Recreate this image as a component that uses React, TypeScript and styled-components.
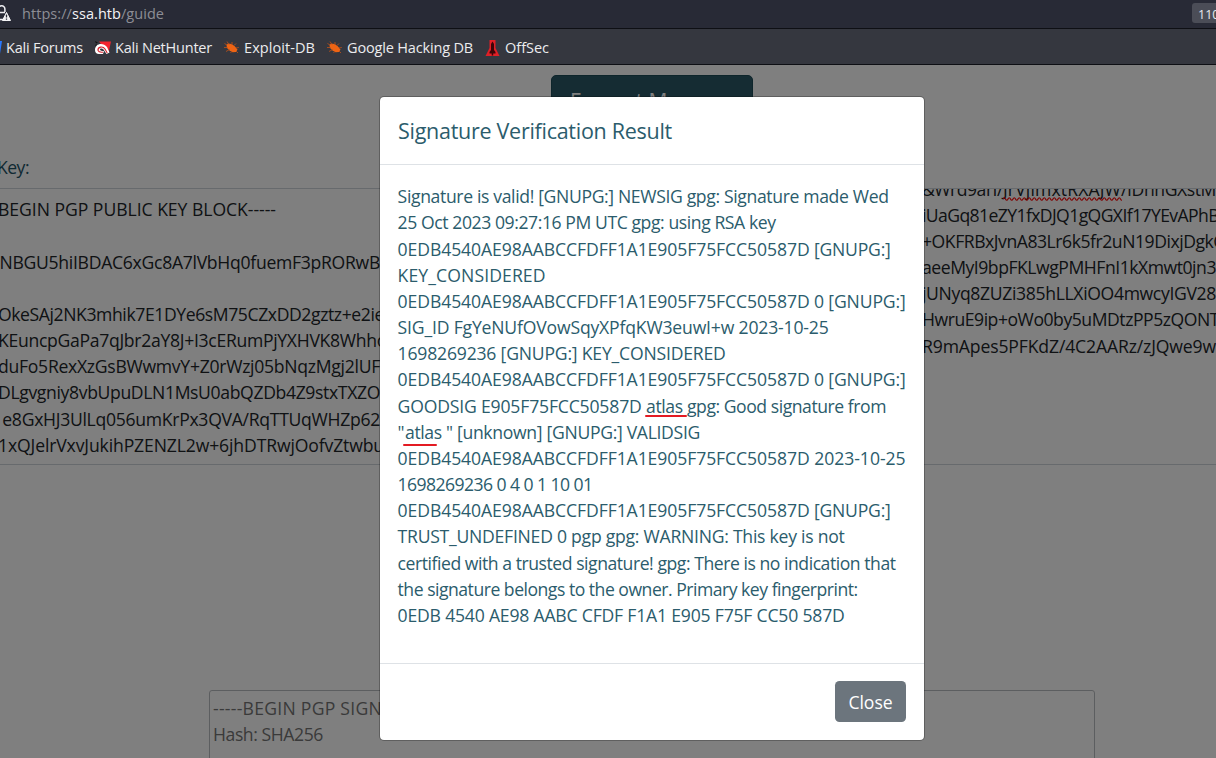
import React, { useLayoutEffect, useRef, useState } from 'react';
import styled, { createGlobalStyle } from 'styled-components';

const GlobalStyle = createGlobalStyle`
  * { box-sizing: border-box; }
  body { margin: 0; overflow: hidden; background: #fff; font-family: "Open Sans", "Noto Sans", sans-serif; }
`;

const Window = styled.div`
  width: 1216px;
  height: 758px;
  display: flex;
  flex-direction: column;
  overflow: hidden;
`;

const UrlBar = styled.div`
  height: 29px;
  flex: none;
  display: flex;
  align-items: center;
  background: #282a36;
  border-bottom: 1px solid #0e0f14;
  color: #8d8e95;
  font-size: 14.5px;
  line-height: 26px;
`;

const LockIcon = styled.svg`
  width: 12px;
  height: 20px;
  margin-right: 10px;
`;

const Host = styled.span`
  color: #f4f4f6;
`;

const Zoom = styled.div`
  margin-left: auto;
  width: 24px;
  height: 20px;
  margin-top: -2px;
  padding-left: 6px;
  line-height: 23px;
  font-size: 12.5px;
  color: #e8e9ee;
  background: #4b4d57;
  border-radius: 3px 0 0 3px;
`;

const Bookmarks = styled.div`
  height: 36px;
  flex: none;
  display: flex;
  align-items: center;
  background: #35373f;
  border-bottom: 1px solid #0e0f14;
  color: #ececee;
  font-size: 14.5px;
  line-height: 32px;
  padding-top: 3px;
`;

const Bookmark = styled.div<{ $before: number }>`
  display: flex;
  align-items: center;
  margin-left: ${(p) => p.$before}px;
`;

const BookmarkIcon = styled.svg<{ $w: number }>`
  width: ${(p) => p.$w}px;
  height: 16px;
  margin-right: ${(p) => (p.$w === 15 ? 5 : 4)}px;
`;

const Page = styled.main`
  position: relative;
  flex: 1;
  display: flex;
  flex-direction: column;
  overflow: hidden;
  background: #fff;
  color: #212529;
  font-size: 17.6px;
  line-height: 26.15px;
`;

const EncryptButton = styled.div`
  width: 202px;
  height: 49px;
  flex: none;
  margin: 10px 0 0 551px;
  padding: 11px 0 0 18px;
  border: 1px solid #1d4a57;
  border-radius: 5px;
  background: #2a5966;
  color: #fff;
  font-size: 21px;
  line-height: 29px;
`;

const KeyLabel = styled.div`
  height: 64px;
  flex: none;
  padding-top: 30px;
  margin-left: -3px;
  color: #225366;
`;

const Columns = styled.div`
  display: flex;
  flex: none;
  justify-content: space-between;
`;

const Area = styled.div<{ $w: number; $pad: number; $shift: number }>`
  width: ${(p) => p.$w}px;
  height: 277px;
  border: solid #ced4da;
  border-width: 1px 0;
  padding-left: ${(p) => p.$pad}px;
  overflow: hidden;
  & > div:first-child { margin-top: ${(p) => p.$shift}px; }
`;

const Line = styled.div`
  display: flex;
  height: 26.18px;
  white-space: pre;
`;

const MessageArea = styled.div`
  width: 886px;
  height: 120px;
  margin: 225px 0 0 209px;
  flex: none;
  padding: 4px 3px;
  border: 1px solid #b9bcc0;
  border-radius: 3px;
  color: #757575;
`;

const Backdrop = styled.div`
  position: absolute;
  inset: 0;
  background: rgba(0, 0, 0, 0.5);
`;

const Dialog = styled.section`
  position: absolute;
  left: 379px;
  top: 31px;
  width: 546px;
  height: 645px;
  display: flex;
  flex-direction: column;
  background: #fff;
  background-clip: padding-box;
  border: 1px solid rgba(0, 0, 0, 0.25);
  border-radius: 5px;
  color: #2b5c6c;
`;

const DialogHeader = styled.header`
  height: 68px;
  flex: none;
  padding: 19px 18px 0;
  border-bottom: 1px solid #dee2e6;
  font-size: 21.5px;
  line-height: 30px;
`;

const DialogBody = styled.div`
  flex: 1;
  padding: 18.2px 17.6px 0;
`;

const DialogFooter = styled.footer`
  height: 77px;
  flex: none;
  display: flex;
  justify-content: flex-end;
  padding: 17px 18px 0;
  border-top: 1px solid #dee2e6;
`;

const CloseButton = styled.button`
  width: 71px;
  height: 41px;
  padding: 1px 0 0;
  border: 0;
  border-radius: 4.5px;
  background: #6c757d;
  color: #fff;
  font: 17.6px/26px "Open Sans", sans-serif;
`;

const FitText = styled.span`
  display: inline-block;
  flex: none;
  white-space: pre;
`;

const Marked = styled.span`
  position: relative;
`;

const RedMark = styled.i<{ $left: number; $w: number; $top: number }>`
  position: absolute;
  left: ${(p) => p.$left}px;
  top: ${(p) => p.$top}px;
  width: ${(p) => p.$w}px;
  height: 2px;
  border-radius: 1px;
  background: #e31b23;
`;

const Squiggle = styled.svg`
  position: absolute;
  left: 0;
  top: 21px;
  width: 119px;
  height: 4px;
`;

/* Spreads a run of text over a set width by adjusting the letter spacing. */
function Fit({ w, children }: { w: number; children: string }) {
  const ref = useRef<HTMLSpanElement>(null);
  const [spacing, setSpacing] = useState(0);
  useLayoutEffect(() => {
    if (ref.current) {
      setSpacing((w - ref.current.getBoundingClientRect().width) / children.length);
    }
  }, [w, children]);
  return <FitText ref={ref} style={{ letterSpacing: spacing }}>{children}</FitText>;
}

const publicKey: [string, number][] = [
  ['BEGIN PGP PUBLIC KEY BLOCK-----', 278],
  ['', 0],
  ['GNBGU5hiIBDAC6xGc8A7lVbHq0fuemF3pRORwB', 393],
  ['', 0],
  ['OkeSAj2NK3mhik7E1DYe6sM75CZxDD2gztz+e2ie', 386],
  ['KEuncpGaPa7qJbr2aY8J+I3cERumPjYXHVK8Whho', 389],
  ['duFo5RexXzGsBWwmvY+Z0rWzj05bNqzMgj2lUF', 382],
  ['DLgvgniy8vbUpuDLN1MsU0abQZDb4Z9stxTXZO', 382],
  [' e8GxHJ3UlLq056umKrPx3QVA/RqTTUqWHZp62', 382],
  ['1xQJelrVxvJukihPZENZL2w+6jhDTRwjOofvZtwbu', 386],
];
const publicKeyOffset = [-2, 0, -13, 0, -2, -2, -2, -2, -2, -2];

const signedText: [string, number][] = [
  ['iUaGq81eZY1fxDJQ1gQGXIf17YEvAPhB', 297],
  ['+OKFRBxJvnA83Lr6k5fr2uN19DixjDgkC', 302],
  ['aeeMyI9bpFKLwgPMHFnI1kXmwt0jn3', 294],
  ['jUNyq8ZUZi385hLLXiOO4mwcyIGV28', 294],
  ['HwruE9ip+oWo0by5uMDtzPP5zQONT', 297],
  ['R9mApes5PFKdZ/4C2AARz/zJQwe9w', 294],
];

const fingerprint = '0EDB4540AE98AABCCFDFF1A1E905F75FCC50587D';

const Offset = styled.div<{ $x: number }>`
  margin-left: ${(p) => p.$x}px;
`;

const Bug = () => (
  <BookmarkIcon $w={15} viewBox="0 0 15 16">
    <path d="M2.500 5l1.500-1.500 3.500.5 3 2 3 3.500-1.500 2.500-3.500.3-3-1.800L3 8z" fill="#ee6414" />
    <path d="M.5 3.500l2.500 1.500M3 1.500l2 3M8 2v3M0 7.500l3.500 0M2 11.500l3.500-2M6.500 13l1.500-2M10 5.500l2-2M12 8l2.800-.5M12 11l2 2" stroke="#b04f1c" strokeWidth=".9" fill="none" />
  </BookmarkIcon>
);

export default function App() {
  return (
    <Window>
      <GlobalStyle />
      <UrlBar>
        <LockIcon viewBox="0 0 12 20">
          <path d="M-4 8.500h9M-1.500 8V5a3.200 3.200 0 0 1 6.400 0v3M-4 15.500h7" fill="none" stroke="#eeeef2" strokeWidth="1.500" />
          <path d="M6.500 8.500L10.500 16.500H2.500z" fill="#f4f4f6" stroke="#f4f4f6" strokeLinejoin="round" />
          <path d="M6.500 10.500v3M6.500 14.500v1.200" stroke="#282a36" strokeWidth="1.300" />
        </LockIcon>
        <Fit w={50}>https://</Fit>
        <Host><Fit w={49}>ssa.htb</Fit></Host>
        <Fit w={43}>/guide</Fit>
        <Zoom>110%</Zoom>
      </UrlBar>
      <Bookmarks>
        <Bookmark $before={0}>
          <BookmarkIcon $w={2} viewBox="0 0 2 16"><path d="M0 1h2L0 14z" fill="#2878ff" /></BookmarkIcon>
          <Fit w={77}>Kali Forums</Fit>
        </Bookmark>
        <Bookmark $before={12}>
          <BookmarkIcon $w={16} viewBox="0 0 16 16">
            <path d="M4 1.500h12L13.500 13 9 8z" fill="#f3242f" />
            <path d="M0 10C0 3.500 8 2 12 7l2.500 5.500-3 1.500L8.500 9.500C7 8 5 8.500 5 9.500s2 1.500 4 1.500l-1 3H4C1.500 14 0 12.500 0 10z" fill="#fff" />
            <path d="M3 10.500c-.5-4 5-4.500 7-1.500l2.200 4M3 10.500c1 2 3 1.500 5 1.800" fill="none" stroke="#d81f2b" strokeWidth="1.100" />
            <path d="M0 1l3 1.500-2 1zM0 5l2-1-1 2z" fill="#111" />
          </BookmarkIcon>
          <Fit w={97}>Kali NetHunter</Fit>
        </Bookmark>
        <Bookmark $before={12}><Bug /><Fit w={71}>Exploit-DB</Fit></Bookmark>
        <Bookmark $before={12}><Bug /><Fit w={126}>Google Hacking DB</Fit></Bookmark>
        <Bookmark $before={12}>
          <BookmarkIcon $w={15} viewBox="0 0 15 16">
            <path d="M4.500 0H10.500v8l4 8H.5l4-8z" fill="#df1f26" />
            <path d="M7.500 1.500L9 4v6l1.500 2v1.500H8.200v2H6.700v-2H4.500V12L6 10V4z" fill="#3b0508" />
          </BookmarkIcon>
          <Fit w={44}>OffSec</Fit>
        </Bookmark>
      </Bookmarks>

      <Page>
        <EncryptButton><Fit w={163}>Encrypt Message</Fit></EncryptButton>
        <KeyLabel><Fit w={32}>Key:</Fit></KeyLabel>
        <Columns>
          <Area $w={500} $pad={0} $shift={7.2}>
            {publicKey.map(([text, w], i) => (
              <Line key={i}>
                {text && <Offset $x={publicKeyOffset[i]}><Fit w={w}>{text}</Fit></Offset>}
              </Line>
            ))}
          </Area>
          <Area $w={420} $pad={126} $shift={-13.4}>
            <Line>
              <Fit w={81}>&amp;Wrd9arI/</Fit>
              <Marked>
                <Fit w={118}>JrVjimxtRXAJW</Fit>
                <Squiggle viewBox="0 0 119 4">
                  <path
                    d={'M0 2' + 'q1.250 -2.500 2.500 0t2.500 0'.repeat(24)}
                    fill="none"
                    stroke="#ff0000"
                    strokeWidth="1.200"
                  />
                </Squiggle>
              </Marked>
              <Fit w={95}>/IDhhGXstM</Fit>
            </Line>
            {signedText.map(([text, w]) => (
              <Line key={text}><Fit w={w}>{text}</Fit></Line>
            ))}
          </Area>
        </Columns>
        <MessageArea>
          <Line><Fit w={169}>-----BEGIN PGP SIGN</Fit></Line>
          <Line><Fit w={110}>Hash: SHA256</Fit></Line>
        </MessageArea>

        <Backdrop />
        <Dialog>
          <DialogHeader><Fit w={274}>Signature Verification Result</Fit></DialogHeader>
          <DialogBody>
            <Line><Fit w={491}>Signature is valid! [GNUPG:] NEWSIG gpg: Signature made Wed</Fit></Line>
            <Line><Fit w={378}>25 Oct 2023 09:27:16 PM UTC gpg: using RSA key</Fit></Line>
            <Line><Fit w={412}>{fingerprint}</Fit><Fit w={81}> [GNUPG:]</Fit></Line>
            <Line><Fit w={148}>KEY_CONSIDERED</Fit></Line>
            <Line><Fit w={412}>{fingerprint}</Fit><Fit w={96}> 0 [GNUPG:]</Fit></Line>
            <Line><Fit w={431}>SIG_ID FgYeNUfOVowSqyXPfqKW3euwI+w 2023-10-25</Fit></Line>
            <Line><Fit w={328}>1698269236 [GNUPG:] KEY_CONSIDERED</Fit></Line>
            <Line><Fit w={412}>{fingerprint}</Fit><Fit w={96}> 0 [GNUPG:]</Fit></Line>
            <Line>
              <Fit w={248.4}>{'GOODSIG E905F75FCC50587D '}</Fit>
              <Marked><Fit w={41}>{'atlas '}</Fit><RedMark $left={-1} $w={42} $top={22.4} /></Marked>
              <Fit w={199}>gpg: Good signature from</Fit>
            </Line>
            <Line>
              <Fit w={7.4}>"</Fit>
              <Marked><Fit w={41}>{'atlas '}</Fit><RedMark $left={-2} $w={34} $top={25} /></Marked>
              <Fit w={254}>" [unknown] [GNUPG:] VALIDSIG</Fit>
            </Line>
            <Line><Fit w={412}>{fingerprint}</Fit><Fit w={96}> 2023-10-25</Fit></Line>
            <Line><Fit w={195}>1698269236 0 4 0 1 10 01</Fit></Line>
            <Line><Fit w={412}>{fingerprint}</Fit><Fit w={81}> [GNUPG:]</Fit></Line>
            <Line><Fit w={447}>TRUST_UNDEFINED 0 pgp gpg: WARNING: This key is not</Fit></Line>
            <Line><Fit w={498}>certified with a trusted signature! gpg: There is no indication that</Fit></Line>
            <Line><Fit w={460}>the signature belongs to the owner. Primary key fingerprint:</Fit></Line>
            <Line><Fit w={447}>0EDB 4540 AE98 AABC CFDF F1A1 E905 F75F CC50 587D</Fit></Line>
          </DialogBody>
          <DialogFooter>
            <CloseButton><Fit w={44}>Close</Fit></CloseButton>
          </DialogFooter>
        </Dialog>
      </Page>
    </Window>
  );
}
